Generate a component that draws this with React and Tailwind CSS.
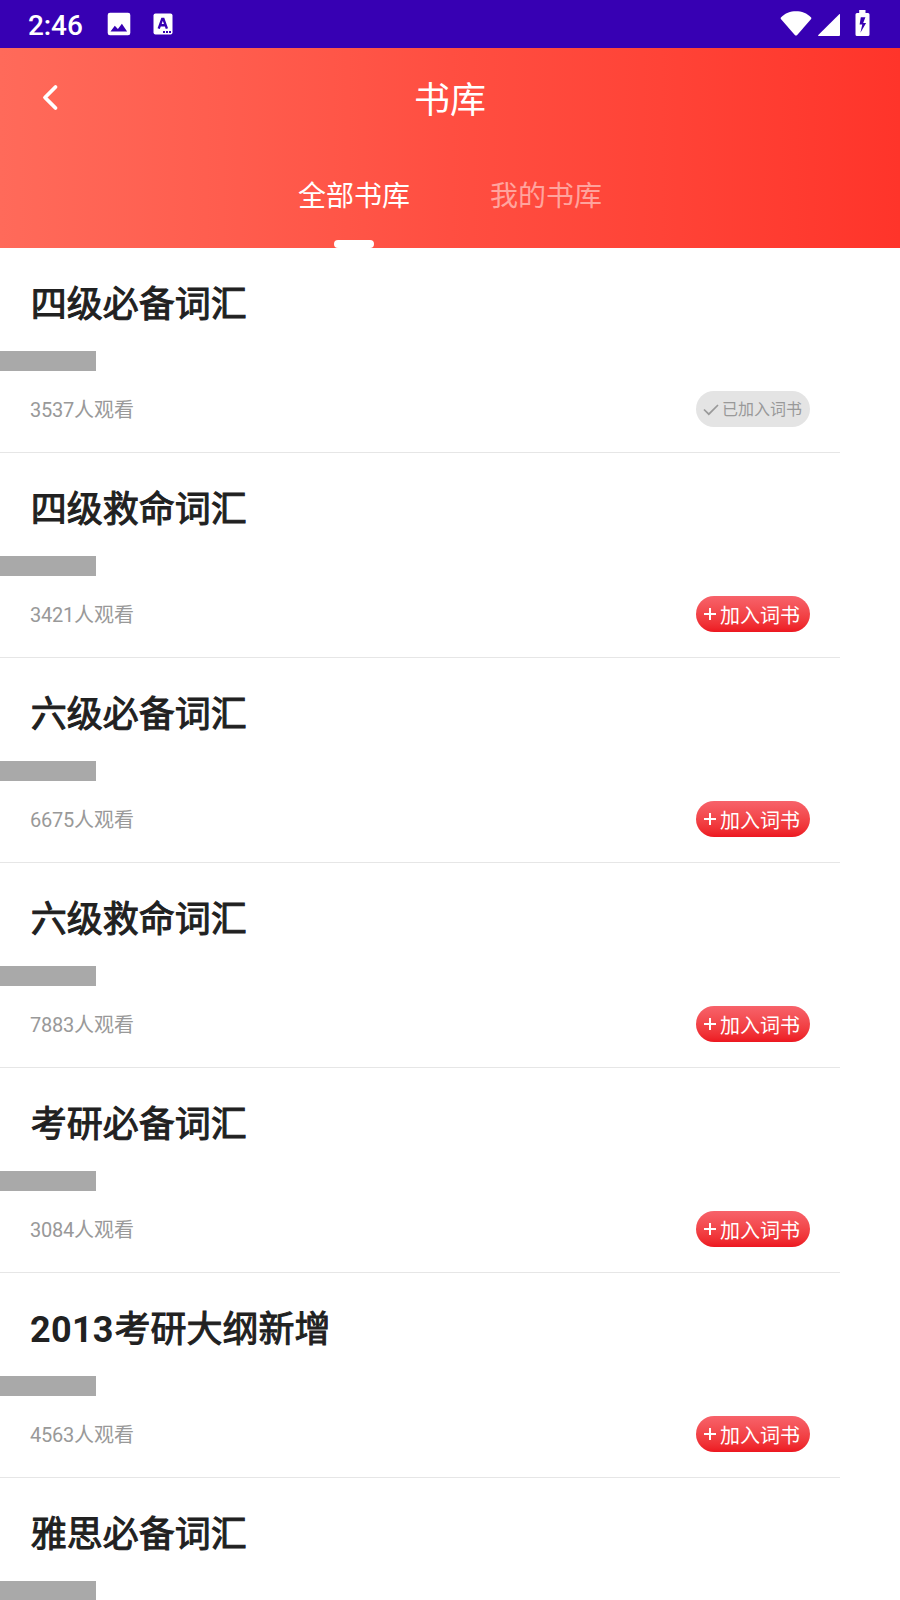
import React from "react";

const books = [
  { digits: "", title: "四级必备词汇", views: 3537, added: true },
  { digits: "", title: "四级救命词汇", views: 3421 },
  { digits: "", title: "六级必备词汇", views: 6675 },
  { digits: "", title: "六级救命词汇", views: 7883 },
  { digits: "", title: "考研必备词汇", views: 3084 },
  { digits: "2013", title: "考研大纲新增", views: 4563 },
  { digits: "", title: "雅思必备词汇" },
];

function StatusBar() {
  return (
    <div className="flex h-12 shrink-0 items-start bg-[#3700b3] text-white">
      <span className="mt-[10px] ml-7 w-[54px] text-[28px] leading-8 font-medium tracking-[-0.1px]">2:46</span>
      <svg className="mt-3 ml-[25px] h-6 w-6" viewBox="0 0 24 24" fill="currentColor">
        <path fillRule="evenodd" d="M3 .7h18a2.3 2.3 0 0 1 2.3 2.3v18a2.3 2.3 0 0 1-2.3 2.3H3A2.3 2.3 0 0 1 .7 21V3A2.3 2.3 0 0 1 3 .7ZM3.5 19.6h16.6l-5.2-7.8-4 5.2-3.1-3.2Z" />
      </svg>
      <svg className="mt-[13px] ml-[22px] h-[22px] w-5" viewBox="0 0 20 22">
        <rect x=".5" y=".5" width="19" height="21" rx="2" fill="white" />
        <path d="M5.700 15.600 9.200 6h1.200l3.500 9.600M7 12.200h5.600" fill="none" stroke="#3700b3" strokeWidth="2.400" />
        <path d="M10 18h2v2h-2zM13 18h2v2h-2zM16 18h2v2h-2z" fill="#3700b3" />
      </svg>
      <svg className="mt-[11px] ml-auto h-[25px] w-8" viewBox="0 0 32 25" fill="currentColor">
        <path d="M.9 6.500C5 2.200 10.400.3 16 .3s11 1.900 15.100 6.200q.6.700 0 1.500L17.200 24q-1.200 1-2.400 0L.9 8q-.6-.8 0-1.500Z" />
      </svg>
      <svg className="mt-[13px] ml-[5px] h-6 w-6" viewBox="0 0 24 24" fill="currentColor">
        <path d="M22.500 1Q23 .6 23 1.500V22q0 1-1 1H1.800q-1.400 0-.5-1Z" />
      </svg>
      <svg className="mt-2.5 mr-[30px] ml-[14px] h-[26px] w-[15px]" viewBox="0 0 15 26" fill="currentColor">
        <path fillRule="evenodd" d="M4.200 0h6.300v3H13q1.500 0 1.500 1.500v20Q14.500 26 13 26H2Q.5 26 .5 24.500v-20Q.5 3 2 3h2.200ZM5.800 7.200 4.600 14.500h2.700L5.400 22.800l5.700-9.800H8.200l2.200-5.800Z" />
      </svg>
    </div>
  );
}

function Header() {
  return (
    <header className="flex h-[200px] shrink-0 flex-col bg-linear-to-r from-[#ff6a5a] via-[#ff4e41] to-[#ff342a] text-white">
      <div className="grid h-[100px] grid-cols-3 items-center">
        <svg className="ml-[41px] h-7 w-5" viewBox="0 0 20 28" fill="none" stroke="currentColor" strokeWidth="3.800" strokeLinecap="round" strokeLinejoin="round">
          <path d="M14.500 3 4 13.500l10.500 10.500" />
        </svg>
        <h1 className="pt-1.5 text-center text-[36px] leading-[52px]">书库</h1>
      </div>
      <nav className="flex h-[100px] justify-center gap-20 text-[28px] leading-10">
        <div className="flex flex-col items-center justify-between pt-[29px]">
          <span>全部书库</span>
          <i className="h-2 w-10 rounded-[4px] bg-white" />
        </div>
        <span className="pt-[29px] text-white/50">我的书库</span>
      </nav>
    </header>
  );
}

function AddButton({ added }) {
  if (added) {
    return (
      <button className="flex h-9 w-[114px] items-center rounded-full bg-[#e4e4e4] pl-[7px] text-[16px] leading-6 text-[#999]">
        <svg className="mr-[3px] h-4 w-4 shrink-0" viewBox="0 0 16 16" fill="none" stroke="currentColor" strokeWidth="1.700">
          <path d="m1 8.500 4.800 4.700L15 4" />
        </svg>
        <span className="pt-0.5 whitespace-nowrap">已加入词书</span>
      </button>
    );
  }
  return (
    <button className="flex h-9 w-[114px] items-center rounded-full bg-linear-to-b from-[#f7626a] to-[#ed1620] pl-2 text-[20px] leading-7 text-white">
      <svg className="mr-1 h-3 w-3 shrink-0" viewBox="0 0 12 12" stroke="currentColor" strokeWidth="2">
        <path d="M0 6h12M6 0v12" />
      </svg>
      <span className="pt-[3px] whitespace-nowrap">加入词书</span>
    </button>
  );
}

function BookRow({ book }) {
  return (
    <li className="flex h-[205px] w-[840px] shrink-0 flex-col border-b border-[#e6e6e6]">
      <h2 className="mt-[31px] ml-[30px] flex h-[52px] text-[36px] leading-[52px] whitespace-nowrap text-[#212121]">
        {book.digits && <span className="font-bold tracking-[0.3px]">{book.digits}</span>}
        <span className="ml-[0.7px] [-webkit-text-stroke:1px_#212121]">{book.title}</span>
      </h2>
      <div className="mt-5 h-5 w-24 shrink-0 bg-[#a9a9a9]" />
      {book.views && (
        <div className="mt-5 flex h-9 items-center justify-between px-[30px]">
          <span className="pt-0.5 text-[20px] leading-7 text-[#999]">
            <span className="tracking-[-0.25px]">{book.views}</span>人观看
          </span>
          <AddButton added={book.added} />
        </div>
      )}
    </li>
  );
}

export default function App() {
  return (
    <div className="flex h-[1600px] w-[900px] flex-col overflow-hidden bg-white font-[Roboto,'Noto_Sans_CJK_SC',sans-serif]">
      <StatusBar />
      <Header />
      <ul className="flex flex-col">
        {books.map((book) => (
          <BookRow key={book.digits + book.title} book={book} />
        ))}
      </ul>
    </div>
  );
}
